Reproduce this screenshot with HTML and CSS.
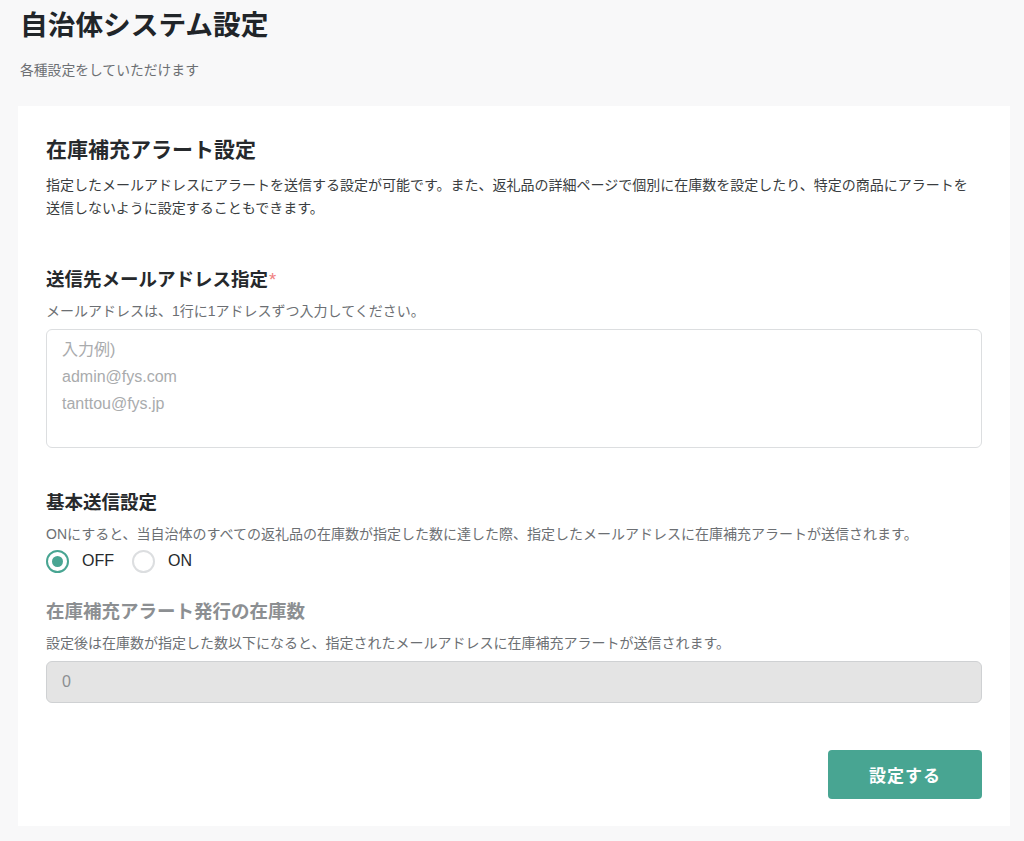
FILE: index.html
```html
<!DOCTYPE html>
<html lang="ja">
<head>
<meta charset="utf-8">
<title>自治体システム設定</title>
<link rel="stylesheet" href="styles.css">
</head>
<body>
<div class="page">
  <h1 class="page-title">自治体システム設定</h1>
  <p class="page-sub">各種設定をしていただけます</p>
  <div class="card">
    <h2 class="card-title">在庫補充アラート設定</h2>
    <p class="card-desc">指定したメールアドレスにアラートを送信する設定が可能です。また、返礼品の詳細ページで個別に在庫数を設定したり、特定の商品にアラートを送信しないように設定することもできます。</p>

    <h3 class="sec-title sec-first">送信先メールアドレス指定<span class="req">*</span></h3>
    <p class="note">メールアドレスは、1行に1アドレスずつ入力してください。</p>
    <textarea class="ta" placeholder="入力例)&#10;admin@fys.com&#10;tanttou@fys.jp"></textarea>

    <h3 class="sec-title sec-second">基本送信設定</h3>
    <p class="note">ONにすると、当自治体のすべての返礼品の在庫数が指定した数に達した際、指定したメールアドレスに在庫補充アラートが送信されます。</p>
    <div class="radios">
      <label class="radio"><span class="dot checked"></span><span>OFF</span></label>
      <label class="radio"><span class="dot"></span><span>ON</span></label>
    </div>

    <h3 class="sec-title sec-third disabled">在庫補充アラート発行の在庫数</h3>
    <p class="note">設定後は在庫数が指定した数以下になると、指定されたメールアドレスに在庫補充アラートが送信されます。</p>
    <div class="num">0</div>

    <div class="actions">
      <button class="btn">設定する</button>
    </div>
  </div>
</div>
</body>
</html>
```

FILE: styles.css
```css
* { box-sizing: border-box; }
html, body { margin: 0; padding: 0; }
body {
  background: #f8f8f9;
  font-family: "Liberation Sans", "Noto Sans CJK JP", sans-serif;
  color: #26292c;
}
.page {
  padding: 8px 14px 15px 18px;
}
.page-title {
  margin: 0 0 0 2px;
  font-size: 27.7px;
  line-height: 36px;
  font-weight: 700;
  color: #212529;
}
.page-sub {
  margin: 17px 0 0 2px;
  font-size: 13.8px;
  line-height: 20px;
  color: #6c6f73;
}
.card {
  margin-top: 25px;
  background: #fff;
  padding: 29px 28px 27px;
}
.card-title {
  margin: 0;
  font-size: 21px;
  line-height: 30px;
  font-weight: 700;
  color: #26292c;
}
.card-desc {
  margin: 9px 0 0;
  padding-right: 8px;
  font-size: 14px;
  line-height: 23px;
  color: #3a3d40;
}
.sec-title {
  margin: 0;
  font-size: 18.5px;
  line-height: 26px;
  font-weight: 700;
  color: #26292c;
}
.sec-first { margin-top: 47px; }
.sec-second { margin-top: 42px; }
.sec-third { margin-top: 26px; }
.sec-title.disabled { color: #8c8f92; }
.req { color: #f08080; font-weight: 400; margin-left: 1px; }
.note {
  margin: 8px 0 0;
  font-size: 14px;
  line-height: 20px;
  color: #6c6f73;
}
.ta {
  display: block;
  width: 100%;
  height: 119px;
  margin-top: 8px;
  padding: 6px 15px;
  border: 1px solid #dcdee0;
  border-radius: 6px;
  font-family: "Liberation Sans", "Noto Sans CJK JP", sans-serif;
  font-size: 16px;
  line-height: 27px;
  resize: none;
  outline: none;
  background: #fff;
}
.ta::placeholder { color: #a9abad; }
.radios {
  display: flex;
  gap: 18px;
  margin-top: 5px;
  height: 24px;
  align-items: center;
}
.radio {
  display: flex;
  align-items: center;
  gap: 13px;
  font-size: 16px;
  color: #26292c;
}
.dot {
  width: 23px;
  height: 23px;
  border-radius: 50%;
  border: 2px solid #dcdee0;
  display: flex;
  align-items: center;
  justify-content: center;
}
.dot.checked { border-color: #48a592; }
.dot.checked::after {
  content: "";
  width: 11px;
  height: 11px;
  border-radius: 50%;
  background: #48a592;
}
.num {
  margin-top: 8px;
  height: 42px;
  border: 1px solid #cfd1d3;
  border-radius: 6px;
  background: #e4e4e4;
  padding: 0 15px;
  display: flex;
  align-items: center;
  font-size: 16px;
  color: #8c8f92;
}
.actions {
  display: flex;
  justify-content: flex-end;
  margin-top: 47px;
}
.btn {
  width: 154px;
  height: 49px;
  border: none;
  border-radius: 4px;
  background: #48a592;
  color: #fff;
  font-family: "Liberation Sans", "Noto Sans CJK JP", sans-serif;
  font-size: 17px;
  font-weight: 700;
  letter-spacing: 1px;
}
```
